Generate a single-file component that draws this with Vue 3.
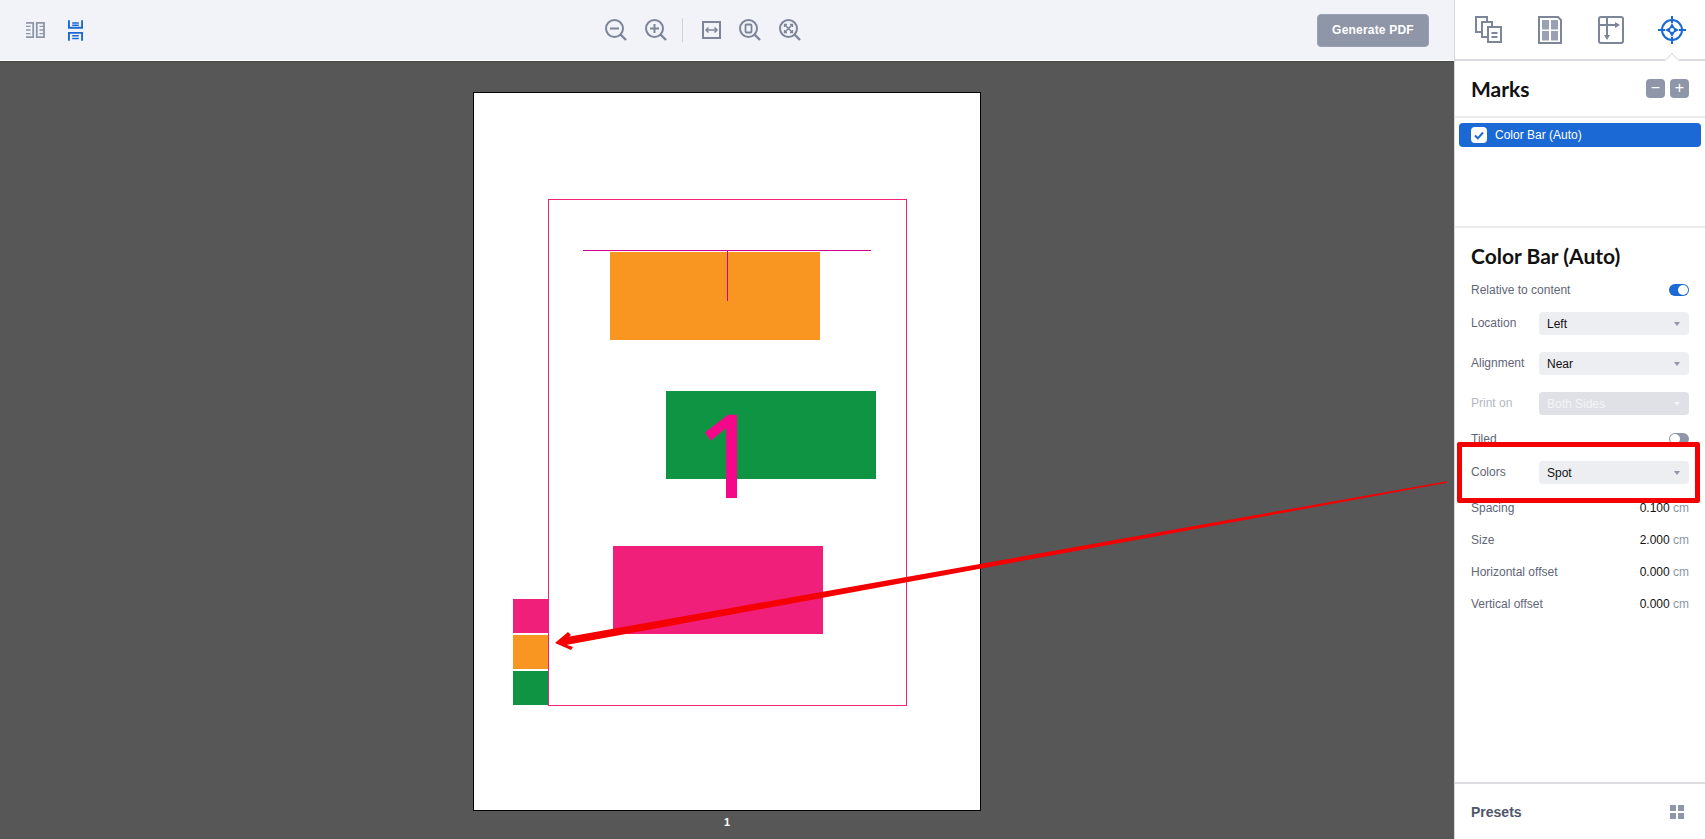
<template>
  <div class="app">
    <div class="workspace">
      <header class="toolbar">
        <div class="view-modes">
          <button class="tool">
            <svg width="20" height="18" viewBox="0 0 22 20" fill="none" stroke="#8e96a8" stroke-width="2">
              <path d="M1 2h8v16H1M13 2h8v16h-8z" />
              <path d="M1 6h5M1 10h5M1 14h5M16 6h5M16 10h5M16 14h5" stroke-width="1.6" />
            </svg>
          </button>
          <button class="tool">
            <svg width="15" height="21" viewBox="0 0 16 22" fill="none" stroke="#1a69d4" stroke-width="2">
              <path d="M1 0v8h14V0M1 22v-8.500h14V22" />
              <path d="M4.500 3h7M4.500 5.500h7M4.500 16.500h7M4.500 19.500h7" stroke-width="1.600" />
            </svg>
          </button>
        </div>
        <div class="zoom-tools">
          <svg class="zi" width="24" height="24" viewBox="0 0 24 24" fill="none" stroke="#7d8598" stroke-width="2"><circle cx="10.500" cy="10.500" r="8.500" /><path d="M16.500 16.500l5.500 5.500" stroke-width="2.400" /><path d="M6 10.500h9" /></svg>
          <svg class="zi" width="24" height="24" viewBox="0 0 24 24" fill="none" stroke="#7d8598" stroke-width="2"><circle cx="10.500" cy="10.500" r="8.500" /><path d="M16.500 16.500l5.500 5.500" stroke-width="2.400" /><path d="M6 10.500h9M10.500 6v9" /></svg>
          <span class="sep"></span>
          <svg class="zi" width="20" height="20" viewBox="0 0 20 20" fill="none" stroke="#7d8598" stroke-width="2"><rect x="1" y="2" width="17" height="16" /><path d="M4.500 10h10" stroke-width="1.500" /><path d="M6.500 7.500L4 10l2.500 2.500M12.500 7.500L15 10l-2.500 2.500" stroke-width="1.500" /></svg>
          <svg class="zi" width="24" height="24" viewBox="0 0 24 24" fill="none" stroke="#7d8598" stroke-width="2"><circle cx="10.500" cy="10.500" r="8.500" /><path d="M16.500 16.500l5.500 5.500" stroke-width="2.400" /><rect x="7.500" y="6.500" width="6" height="8" rx="1" stroke-width="1.800" /></svg>
          <svg class="zi" width="24" height="24" viewBox="0 0 24 24" fill="none" stroke="#7d8598" stroke-width="2"><circle cx="10.500" cy="10.500" r="8.500" /><path d="M16.500 16.500l5.500 5.500" stroke-width="2.400" /><path d="M7 7l7 7M14 7l-7 7" stroke-width="1.500" /><path d="M6.500 9V6.500H9M12 6.500h2.500V9M14.500 12v2.500H12M9 14.500H6.500V12" stroke-width="1.300" /></svg>
        </div>
        <div class="actions">
          <button class="generate">Generate PDF</button>
        </div>
      </header>

      <main class="canvas">
        <div class="page">
          <div class="art frame"></div>
          <div class="art block orange"></div>
          <div class="art block green"></div>
          <div class="art block pink"></div>
          <div class="art h-line"></div>
          <div class="art v-line"></div>
          <div class="art big-num">1</div>
          <div class="art bar bar-pink"></div>
          <div class="art bar bar-orange"></div>
          <div class="art bar bar-green"></div>
        </div>
        <div class="page-num">1</div>
      </main>
    </div>

    <aside class="panel">
      <nav class="tabs">
        <button class="tab">
          <svg width="27" height="27" viewBox="0 0 27 27" fill="none" stroke="#7d8598" stroke-width="2">
            <path d="M12 6V1H1v15h6" />
            <path d="M17 11V6H7v15h6" />
            <rect x="13" y="11" width="13" height="15" />
            <path d="M16.500 17h6M16.500 21h6" />
          </svg>
        </button>
        <button class="tab">
          <svg width="24" height="28" viewBox="0 0 24 28" fill="none" stroke="#7d8598" stroke-width="2">
            <path d="M1 1h19l3 3v23H1z" />
            <rect x="4" y="4" width="7" height="9.500" fill="#9aa1b2" stroke="none" />
            <rect x="13" y="4" width="7" height="9.500" fill="#9aa1b2" stroke="none" />
            <rect x="4" y="15" width="7" height="9.500" fill="#9aa1b2" stroke="none" />
            <rect x="13" y="15" width="7" height="9.500" fill="#9aa1b2" stroke="none" />
          </svg>
        </button>
        <button class="tab">
          <svg width="26" height="28" viewBox="0 0 26 28" fill="none" stroke="#7d8598" stroke-width="2">
            <rect x="1" y="1" width="24" height="26" rx="2" />
            <path d="M1 9h17M9 1v19" />
            <path d="M17 6l5 3-5 3z" fill="#7d8598" stroke="none" />
            <path d="M6 19l3 5 3-5z" fill="#7d8598" stroke="none" />
          </svg>
        </button>
        <button class="tab active">
          <svg width="28" height="28" viewBox="0 0 28 28" fill="none" stroke="#1a69d4" stroke-width="2">
            <circle cx="14" cy="14" r="10" />
            <path d="M14 0v7M14 21v7M0 14h7M21 14h7" />
            <path d="M14 7l2.500 4.500L21 14l-4.500 2.500L14 21l-2.500-4.500L7 14l4.500-2.500z" fill="#1a69d4" stroke="none" />
            <circle cx="14" cy="14" r="2" fill="#fff" stroke="none" />
          </svg>
        </button>
      </nav>

      <section class="marks-head">
        <h2>Marks</h2>
        <div class="mini-btns">
          <span class="mini">&minus;</span>
          <span class="mini">+</span>
        </div>
      </section>

      <ul class="marks-list">
        <li class="mark selected">
          <span class="check">
            <svg width="10" height="9" viewBox="0 0 10 9" fill="none" stroke="#1a69d4" stroke-width="2"><path d="M1 4.500l2.800 2.800L9 1.500" /></svg>
          </span>
          Color Bar (Auto)
        </li>
      </ul>

      <section class="details">
        <h2>Color Bar (Auto)</h2>
        <template v-for="row in rows" :key="row.label">
          <div v-if="row.type === 'toggle'" class="row toggle-row" :class="{ on: row.on }">
            <label>{{ row.label }}</label>
            <span class="switch"><i></i></span>
          </div>
          <div v-else-if="row.type === 'select'" class="row select-row" :class="{ off: row.off }">
            <label>{{ row.label }}</label>
            <div class="select">{{ row.value }}<b></b></div>
          </div>
          <div v-else class="row num-row">
            <label>{{ row.label }}</label>
            <span class="num">{{ row.value }} <em>cm</em></span>
          </div>
        </template>
      </section>

      <footer class="presets">
        <span>Presets</span>
        <svg width="14" height="14" viewBox="0 0 14 14" fill="#8e96a8">
          <rect width="6" height="6" /><rect x="8" width="6" height="6" />
          <rect y="8" width="6" height="6" /><rect x="8" y="8" width="6" height="6" />
        </svg>
      </footer>
    </aside>

    <!-- annotation on top of the screenshot -->
    <div class="callout"></div>
    <svg class="arrow" width="1705" height="839" viewBox="0 0 1705 839">
      <path d="M1447 481.300L1447 482.700L566 645L564 637.500Z" fill="#f40000" />
      <path d="M555 643L568 632L571 635L566 640L567 645L573 647L571 650Z" fill="#f40000" />
    </svg>
  </div>
</template>

<script setup>
const rows = [
  { type: 'toggle', label: 'Relative to content', on: true },
  { type: 'select', label: 'Location', value: 'Left' },
  { type: 'select', label: 'Alignment', value: 'Near' },
  { type: 'select', label: 'Print on', value: 'Both Sides', off: true },
  { type: 'toggle', label: 'Tiled', on: false },
  { type: 'select', label: 'Colors', value: 'Spot' },
  { type: 'num', label: 'Spacing', value: '0.100' },
  { type: 'num', label: 'Size', value: '2.000' },
  { type: 'num', label: 'Horizontal offset', value: '0.000' },
  { type: 'num', label: 'Vertical offset', value: '0.000' }
]
</script>

<style>
html, body {
  margin: 0;
  overflow: hidden;
  background: #fff;
}
</style>

<style scoped>
.app {
  position: relative;
  display: flex;
  width: 1705px;
  height: 839px;
  overflow: hidden;
  font-family: "Liberation Sans", Arial, sans-serif;
}

.workspace {
  flex: 1;
  display: flex;
  flex-direction: column;
  min-width: 0;
}

.toolbar {
  height: 61px;
  box-sizing: border-box;
  display: flex;
  align-items: center;
  padding: 0 25px;
  background: #f1f3f8;
  border-bottom: 1px solid #fff;
}

button {
  border: none;
  background: none;
  padding: 0;
}

.view-modes {
  flex: 1;
  display: flex;
  align-items: center;
  gap: 23px;
}

.tool {
  display: flex;
}

.zoom-tools {
  display: flex;
  align-items: center;
  gap: 16px;
  margin-right: 48px;
}

.sep {
  width: 1px;
  height: 24px;
  margin: 0 3px 0 -2px;
  background: #cfd2da;
}

.actions {
  flex: 1;
  display: flex;
  justify-content: flex-end;
}

.generate {
  width: 112px;
  height: 33px;
  border-radius: 4px;
  background: #8e96a8;
  border: 1px solid #9aa1b2;
  color: #fff;
  font: bold 12px "Liberation Sans", Arial, sans-serif;
  letter-spacing: 0.2px;
}

.canvas {
  flex: 1;
  display: flex;
  flex-direction: column;
  align-items: center;
  padding-top: 30px;
  background: #575757;
  border-top: 1px solid #4a4a4a;
}

.page {
  position: relative;
  width: 506px;
  height: 717px;
  background: #fff;
  border: 1px solid #000;
  flex: none;
}

.page-num {
  margin-top: 5px;
  color: #fff;
  font-size: 11px;
  font-weight: bold;
}

/* artwork sits on the sheet at its own coordinates */
.art {
  position: absolute;
  box-sizing: border-box;
}

.frame {
  left: 74px;
  top: 106px;
  width: 359px;
  height: 507px;
  border: 1px solid #f0237c;
}

.block {
  width: 210px;
  height: 88px;
}

.orange {
  left: 136px;
  top: 159px;
  background: #f99621;
}

.green {
  left: 192px;
  top: 298px;
  background: #0f9444;
}

.pink {
  left: 139px;
  top: 453px;
  background: #f0207a;
}

.h-line {
  left: 109px;
  top: 157px;
  width: 288px;
  height: 1px;
  background: #d6008c;
}

.v-line {
  left: 253px;
  top: 157px;
  width: 1px;
  height: 51px;
  background: #d6008c;
}

.big-num {
  left: 222px;
  top: 282px;
  font-family: "Open Sans", sans-serif;
  font-size: 114px;
  line-height: 155px;
  color: #f5078a;
  -webkit-text-stroke: 2px #f5078a;
}

.bar {
  left: 39px;
  width: 35px;
  height: 34px;
}

.bar-pink {
  top: 506px;
  background: #f0207a;
}

.bar-orange {
  top: 542px;
  background: #f99621;
}

.bar-green {
  top: 578px;
  background: #0f9444;
}

.panel {
  width: 251px;
  flex: none;
  display: flex;
  flex-direction: column;
  background: #fff;
  border-left: 1px solid #d7d9de;
  box-sizing: border-box;
  border-bottom-right-radius: 12px;
}

.tabs {
  position: relative;
  display: flex;
  height: 61px;
  box-sizing: border-box;
  padding: 0 3px;
  border-bottom: 2px solid #dcdde1;
}

.tab {
  flex: 1;
  display: flex;
  align-items: center;
  justify-content: center;
}

.tab.active {
  position: relative;
}

.tab.active::after {
  content: "";
  position: absolute;
  left: 50%;
  bottom: -6px;
  width: 9px;
  height: 9px;
  margin-left: -5px;
  background: #fff;
  border-top: 1px solid #dcdde1;
  border-left: 1px solid #dcdde1;
  transform: rotate(45deg);
}

h2 {
  margin: 0;
  font-family: Lato, sans-serif;
  font-size: 21px;
  font-weight: 700;
  color: #111;
}

.marks-head {
  height: 57px;
  box-sizing: border-box;
  display: flex;
  align-items: center;
  justify-content: space-between;
  padding: 0 16px 0 16px;
  border-bottom: 2px solid #ececef;
}

.mini-btns {
  display: flex;
  gap: 5px;
}

.mini {
  width: 19px;
  height: 19px;
  border-radius: 4px;
  background: #8e96a8;
  color: #fff;
  font-size: 16px;
  line-height: 18px;
  text-align: center;
}

.marks-list {
  height: 110px;
  box-sizing: border-box;
  margin: 0;
  padding: 5px 4px 0;
  list-style: none;
  border-bottom: 2px solid #ececef;
}

.mark {
  display: flex;
  align-items: center;
  gap: 8px;
  height: 24px;
  padding-left: 12px;
  border-radius: 4px;
  font-size: 12px;
}

.selected {
  background: #1a69d4;
  color: #fff;
}

.check {
  width: 16px;
  height: 16px;
  border-radius: 4px;
  background: #fff;
  display: flex;
  align-items: center;
  justify-content: center;
}

.details {
  flex: 1;
  padding: 0 16px;
}

.details h2 {
  height: 49px;
  line-height: 56px;
}

.row {
  display: flex;
  align-items: center;
  justify-content: space-between;
  font-size: 12px;
}

label {
  color: #5f6678;
}

.toggle-row {
  height: 26px;
}

.select-row {
  height: 40px;
}

.off {
  margin-bottom: 3px;
}

.num-row {
  height: 32px;
}

.switch {
  position: relative;
  width: 20px;
  height: 12px;
  border-radius: 6px;
  background: #8e96a8;
}

.switch i {
  position: absolute;
  left: 1px;
  top: 1px;
  width: 10px;
  height: 10px;
  border-radius: 50%;
  background: #fff;
}

.on .switch {
  background: #1a69d4;
}

.on .switch i {
  left: 9px;
}

.select {
  position: relative;
  width: 150px;
  height: 23px;
  box-sizing: border-box;
  padding-left: 8px;
  border-radius: 4px;
  background: #eceef2;
  color: #111;
  line-height: 24px;
}

.select b {
  position: absolute;
  right: 9px;
  top: 10px;
  border-left: 3px solid transparent;
  border-right: 3px solid transparent;
  border-top: 4px solid #8e96a8;
}

.off label {
  color: #b4b8c2;
}

.off .select {
  background: #dfe1e6;
  color: #f3f4f7;
}

.off .select b {
  border-top-color: #f3f4f7;
}

.num {
  color: #111;
}

.num em {
  font-style: normal;
  color: #8e96a8;
}

.presets {
  height: 57px;
  box-sizing: border-box;
  display: flex;
  align-items: center;
  justify-content: space-between;
  padding: 0 21px 0 16px;
  border-top: 2px solid #dcdde1;
  color: #50566a;
  font-size: 14px;
  font-weight: bold;
}

.callout {
  position: absolute;
  left: 1457px;
  top: 442px;
  width: 243px;
  height: 61px;
  box-sizing: border-box;
  border: 5px solid #f40000;
  border-radius: 2px;
}

.arrow {
  position: absolute;
  left: 0;
  top: 0;
  pointer-events: none;
}
</style>
